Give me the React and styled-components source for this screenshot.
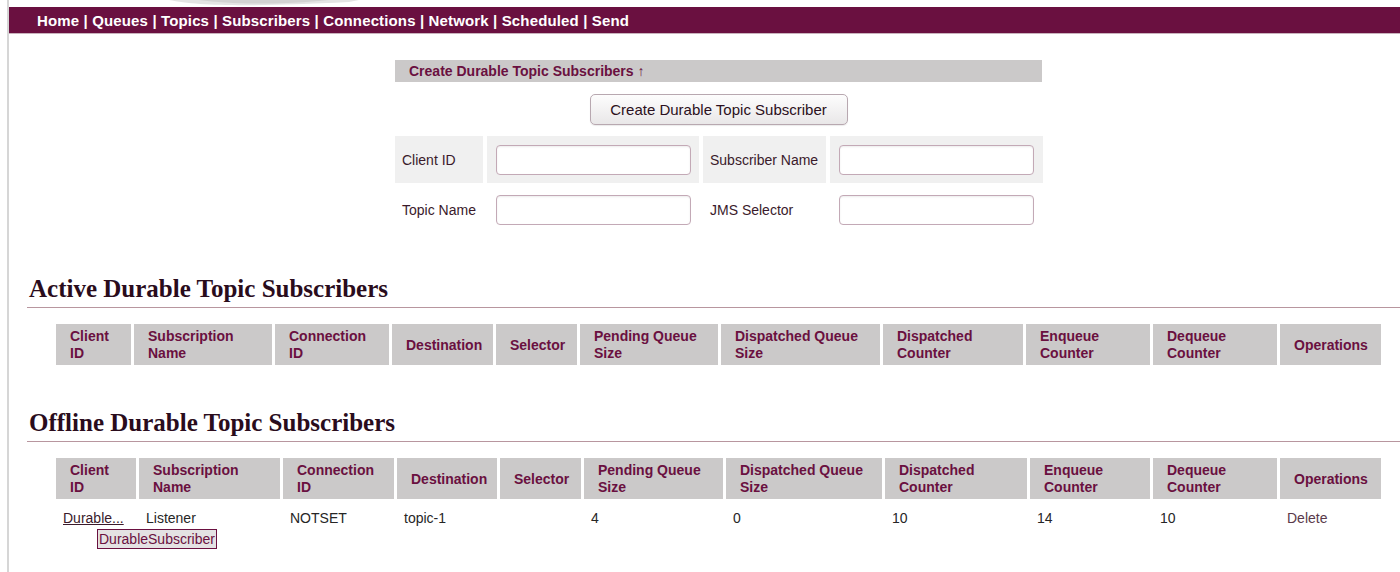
import React from "react";
import styled, { createGlobalStyle } from "styled-components";

const GlobalStyle = createGlobalStyle`
  html, body {
    margin: 0;
    padding: 0;
    background: #fff;
    font-family: "Liberation Sans", Arial, sans-serif;
  }
`;

const Page = styled.div`
  margin-left: 7px;
  border-left: 2px solid #d6d6d6;
  min-height: 572px;
`;

const Banner = styled.div`
  height: 7px;
  overflow: hidden;
  svg {
    display: block;
    margin-left: 150px;
  }
`;

const Nav = styled.nav`
  background: #6a1040;
  height: 27px;
  display: flex;
  align-items: center;
  padding-left: 28px;
  border-bottom: 1px solid #c9b3bd;
  box-sizing: border-box;
  a,
  span {
    color: #fff;
    font-weight: bold;
    font-size: 15px;
    letter-spacing: 0.14px;
    text-decoration: none;
    white-space: pre;
  }
`;

const CreateBox = styled.section`
  width: 647px;
  margin: 26px 0 0 386px;
`;

const BoxTitle = styled.div`
  background: #cbc9c9;
  height: 22px;
  line-height: 22px;
  padding-left: 14px;
  color: #6a1040;
  font-weight: bold;
  font-size: 14px;
`;

const ButtonRow = styled.div`
  display: flex;
  justify-content: center;
  margin-top: 12px;
`;

const Button = styled.button`
  font-family: "Liberation Sans", Arial, sans-serif;
  font-size: 15px;
  color: #2b1020;
  width: 258px;
  height: 31px;
  border: 1px solid #b8a8b0;
  border-radius: 5px;
  background: linear-gradient(#fdfdfd, #e9e7e8);
  box-shadow: 0 1px 1px rgba(0, 0, 0, 0.08);
`;

const FormGrid = styled.div`
  display: grid;
  grid-template-columns: 88px 212px 123px 213px;
  grid-auto-rows: 47px;
  column-gap: 4px;
  row-gap: 3px;
  margin-top: 11px;
`;

const FormCell = styled.div`
  display: flex;
  align-items: center;
  padding-left: ${(p) => (p.$input ? 9 : 7)}px;
  background: ${(p) => (p.$shaded ? "#f0f0f0" : "#fff")};
  color: #3a1a2b;
  font-size: 14px;
`;

const Input = styled.input`
  width: 195px;
  height: 30px;
  box-sizing: border-box;
  border: 1px solid #c3a9b6;
  border-radius: 4px;
  background: #fff;
  box-shadow: inset 0 1px 2px rgba(0, 0, 0, 0.08);
`;

const Section = styled.section`
  padding-left: 18px;
  margin-top: ${(p) => p.$top}px;
`;

const Heading = styled.h2`
  font-family: "Liberation Serif", "Times New Roman", serif;
  font-weight: bold;
  font-size: 25px;
  color: #2a0c1c;
  margin: 0;
  padding: 0 0 4px 2px;
  border-bottom: 1px solid #b8969f;
  line-height: 28px;
`;

const Table = styled.table`
  table-layout: fixed;
  border-spacing: 3px;
  margin: 13px 0 0 26px;
  width: 1331px;
  font-size: 14px;
`;

const Th = styled.th`
  background: #cbc9c9;
  color: #6a1040;
  font-weight: bold;
  text-align: left;
  padding: 4px 4px 3px 14px;
  line-height: 17px;
  vertical-align: middle;
  white-space: nowrap;
`;

const Td = styled.td`
  position: relative;
  color: #262626;
  padding: 8px 7px 4px 7px;
  vertical-align: top;
  line-height: 17px;
  white-space: nowrap;
`;

const ClientLink = styled.a`
  color: #3a1a2b;
  text-decoration: underline;
`;

const DeleteLink = styled.a`
  color: #5a3a4a;
  text-decoration: none;
`;

const Tooltip = styled.div`
  position: absolute;
  left: 41px;
  top: 27px;
  padding: 0 1px;
  background: #e4e2e3;
  border: 1px solid #6a1040;
  color: #6a1040;
  font-size: 14px;
  line-height: 18px;
  white-space: nowrap;
`;

const navItems = ["Home", "Queues", "Topics", "Subscribers", "Connections", "Network", "Scheduled", "Send"];

const columns = [
  ["Client", "ID"],
  ["Subscription", "Name"],
  ["Connection", "ID"],
  ["Destination"],
  ["Selector"],
  ["Pending Queue", "Size"],
  ["Dispatched Queue", "Size"],
  ["Dispatched", "Counter"],
  ["Enqueue", "Counter"],
  ["Dequeue", "Counter"],
  ["Operations"],
];

const activeWidths = [75, 138, 114, 101, 81, 138, 159, 140, 124, 124, 101];
const offlineWidths = [80, 141, 111, 100, 81, 139, 156, 142, 120, 124, 101];

function HeaderRow() {
  return (
    <tr>
      {columns.map((c) => (
        <Th key={c.join(" ")}>
          {c[0]}
          {c[1] && <br />}
          {c[1]}
        </Th>
      ))}
    </tr>
  );
}

function Cols({ widths }) {
  return (
    <colgroup>
      {widths.map((w, i) => (
        <col key={i} style={{ width: w }} />
      ))}
    </colgroup>
  );
}

export default function App() {
  return (
    <>
      <GlobalStyle />
      <Page>
        <Banner>
          <svg width="200" height="7" viewBox="0 0 200 7">
            <path d="M10 0 C40 6 90 7 190 2 L200 0 Z" fill="#e4e4e4" />
            <path d="M40 0 C70 4 110 5 160 1 L170 0 Z" fill="#d2d2d2" />
          </svg>
        </Banner>
        <Nav>
          {navItems.map((item, i) => (
            <React.Fragment key={item}>
              {i > 0 && <span> | </span>}
              <a href="#">{item}</a>
            </React.Fragment>
          ))}
        </Nav>

        <CreateBox>
          <BoxTitle>Create Durable Topic Subscribers ↑</BoxTitle>
          <ButtonRow>
            <Button>Create Durable Topic Subscriber</Button>
          </ButtonRow>
          <FormGrid>
            <FormCell $shaded>Client ID</FormCell>
            <FormCell $shaded $input>
              <Input />
            </FormCell>
            <FormCell $shaded>Subscriber Name</FormCell>
            <FormCell $shaded $input>
              <Input />
            </FormCell>
            <FormCell>Topic Name</FormCell>
            <FormCell $input>
              <Input />
            </FormCell>
            <FormCell>JMS Selector</FormCell>
            <FormCell $input>
              <Input />
            </FormCell>
          </FormGrid>
        </CreateBox>

        <Section $top={42}>
          <Heading>Active Durable Topic Subscribers</Heading>
          <Table>
            <Cols widths={activeWidths} />
            <thead>
              <HeaderRow />
            </thead>
          </Table>
        </Section>

        <Section $top={41}>
          <Heading>Offline Durable Topic Subscribers</Heading>
          <Table>
            <Cols widths={offlineWidths} />
            <thead>
              <HeaderRow />
            </thead>
            <tbody>
              <tr>
                <Td>
                  <ClientLink href="#">Durable...</ClientLink>
                  <Tooltip>DurableSubscriber</Tooltip>
                </Td>
                <Td>Listener</Td>
                <Td>NOTSET</Td>
                <Td>topic-1</Td>
                <Td></Td>
                <Td>4</Td>
                <Td>0</Td>
                <Td>10</Td>
                <Td>14</Td>
                <Td>10</Td>
                <Td>
                  <DeleteLink href="#">Delete</DeleteLink>
                </Td>
              </tr>
            </tbody>
          </Table>
        </Section>
      </Page>
    </>
  );
}
